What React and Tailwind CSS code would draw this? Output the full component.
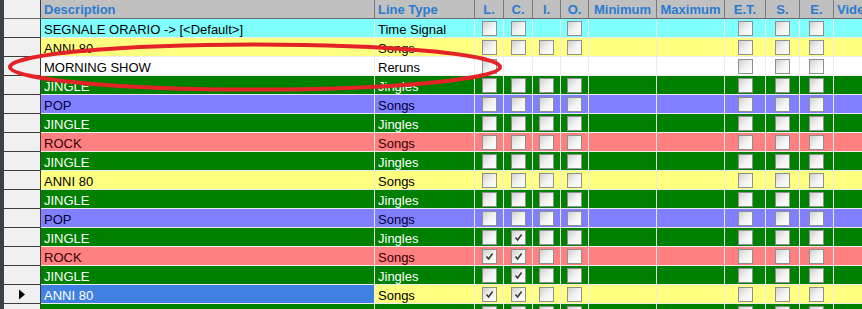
import React from 'react';

const cols = [
  { key: 'd', label: 'Description', w: 'w-[334px]', align: 'left' },
  { key: 't', label: 'Line Type', w: 'w-[100px]', align: 'left' },
  { key: 'L', label: 'L.', w: 'w-[29px]', box: true },
  { key: 'C', label: 'C.', w: 'w-[29px]', box: true },
  { key: 'I', label: 'I.', w: 'w-[28px]', box: true },
  { key: 'O', label: 'O.', w: 'w-[28px]', box: true },
  { key: 'min', label: 'Minimum', w: 'w-[68px]' },
  { key: 'max', label: 'Maximum', w: 'w-[68px]' },
  { key: 'ET', label: 'E.T.', w: 'w-[41px]', box: true },
  { key: 'S', label: 'S.', w: 'w-[34px]', box: true },
  { key: 'E', label: 'E.', w: 'w-[34px]', box: true },
  { key: 'v', label: 'Video', w: 'w-[60px]', align: 'left' },
];

const palette = {
  cyan: 'bg-[#80ffff] text-black',
  yellow: 'bg-[#ffff80] text-black',
  white: 'bg-white text-black',
  green: 'bg-[#008000] text-white',
  pop: 'bg-[#8080ff] text-[#000033]',
  rock: 'bg-[#ff8080] text-[#330000]',
};

const all = ['L', 'C', 'I', 'O', 'ET', 'S', 'E'];

const rows = [
  { d: 'SEGNALE ORARIO -> [<Default>]', t: 'Time Signal', c: 'cyan', boxes: ['L', 'C', 'O', 'ET', 'S', 'E'] },
  { d: 'ANNI 80', t: 'Songs', c: 'yellow' },
  { d: 'MORNING SHOW', t: 'Reruns', c: 'white', boxes: ['L', 'ET', 'S', 'E'] },
  { d: 'JINGLE', t: 'Jingles', c: 'green' },
  { d: 'POP', t: 'Songs', c: 'pop' },
  { d: 'JINGLE', t: 'Jingles', c: 'green' },
  { d: 'ROCK', t: 'Songs', c: 'rock' },
  { d: 'JINGLE', t: 'Jingles', c: 'green' },
  { d: 'ANNI 80', t: 'Songs', c: 'yellow' },
  { d: 'JINGLE', t: 'Jingles', c: 'green' },
  { d: 'POP', t: 'Songs', c: 'pop' },
  { d: 'JINGLE', t: 'Jingles', c: 'green', checked: ['C'] },
  { d: 'ROCK', t: 'Songs', c: 'rock', checked: ['L', 'C'] },
  { d: 'JINGLE', t: 'Jingles', c: 'green', checked: ['C'] },
  { d: 'ANNI 80', t: 'Songs', c: 'yellow', checked: ['L', 'C'], current: true },
  { d: '', t: '', c: 'green' },
];

function Box({ checked }) {
  return (
    <span className="w-[15px] h-[15px] border border-[#8e8f8f] bg-gradient-to-br from-[#cfcfcf] via-[#f2f2f2] to-white flex items-center justify-center">
      {checked && (
        <svg width="9" height="9" viewBox="0 0 9 9">
          <path d="M1.5 4.5 L3.6 7 L7.6 1.5" fill="none" stroke="#333" strokeWidth="1.5" />
        </svg>
      )}
    </span>
  );
}

export default function App() {
  return (
    <div className="relative w-[862px] h-[309px] overflow-hidden bg-[#3c4148] text-[13px] leading-none" style={{ fontFamily: '"Liberation Sans", Arial, sans-serif' }}>
      <div className="flex flex-col pl-[4px]">
        {/* header */}
        <div className="flex h-[19px] border-b border-[#6a6a6a]">
          <div className="w-[37px] shrink-0 bg-[#f0f0f0] border-r border-[#3c3c3c]" />
          {cols.map((c) => (
            <div
              key={c.key}
              className={`${c.w} shrink-0 bg-[#c0c0c0] border-r border-[#7a7a7a] flex items-center pt-[1px] font-bold text-[#2b7bd0] overflow-hidden whitespace-nowrap ${c.align === 'left' ? 'pl-[3px]' : 'justify-center'}`}
            >
              {c.label}
            </div>
          ))}
        </div>

        {rows.map((r, i) => {
          const boxes = r.boxes || all;
          const checked = r.checked || [];
          return (
            <div key={i} className="flex h-[19px]">
              <div className="w-[37px] shrink-0 bg-[#f0f0f0] border-r border-b border-[#3c3c3c] flex items-center justify-center">
                {r.current && (
                  <svg width="8" height="11" viewBox="0 0 8 11">
                    <path d="M1 0.5 L7 5.5 L1 10.5 Z" fill="#000" />
                  </svg>
                )}
              </div>
              {cols.map((c) => {
                const sel = r.current && c.key === 'd';
                return (
                  <div
                    key={c.key}
                    className={`${c.w} shrink-0 border-r border-b border-[#ececec] flex items-center overflow-hidden whitespace-nowrap ${sel ? 'bg-[#4080e0] text-white' : palette[r.c]} ${c.box ? 'justify-center' : 'pl-[3px] pt-[2px]'}`}
                  >
                    {c.key === 'd' && r.d}
                    {c.key === 't' && r.t}
                    {c.box && boxes.includes(c.key) && <Box checked={checked.includes(c.key)} />}
                  </div>
                );
              })}
            </div>
          );
        })}
      </div>

      {/* red annotation ellipse */}
      <svg className="absolute left-0 top-0 pointer-events-none" width="862" height="309">
        <ellipse cx="255" cy="67" rx="245" ry="22.5" fill="none" stroke="#e42328" strokeWidth="4" />
      </svg>
    </div>
  );
}
